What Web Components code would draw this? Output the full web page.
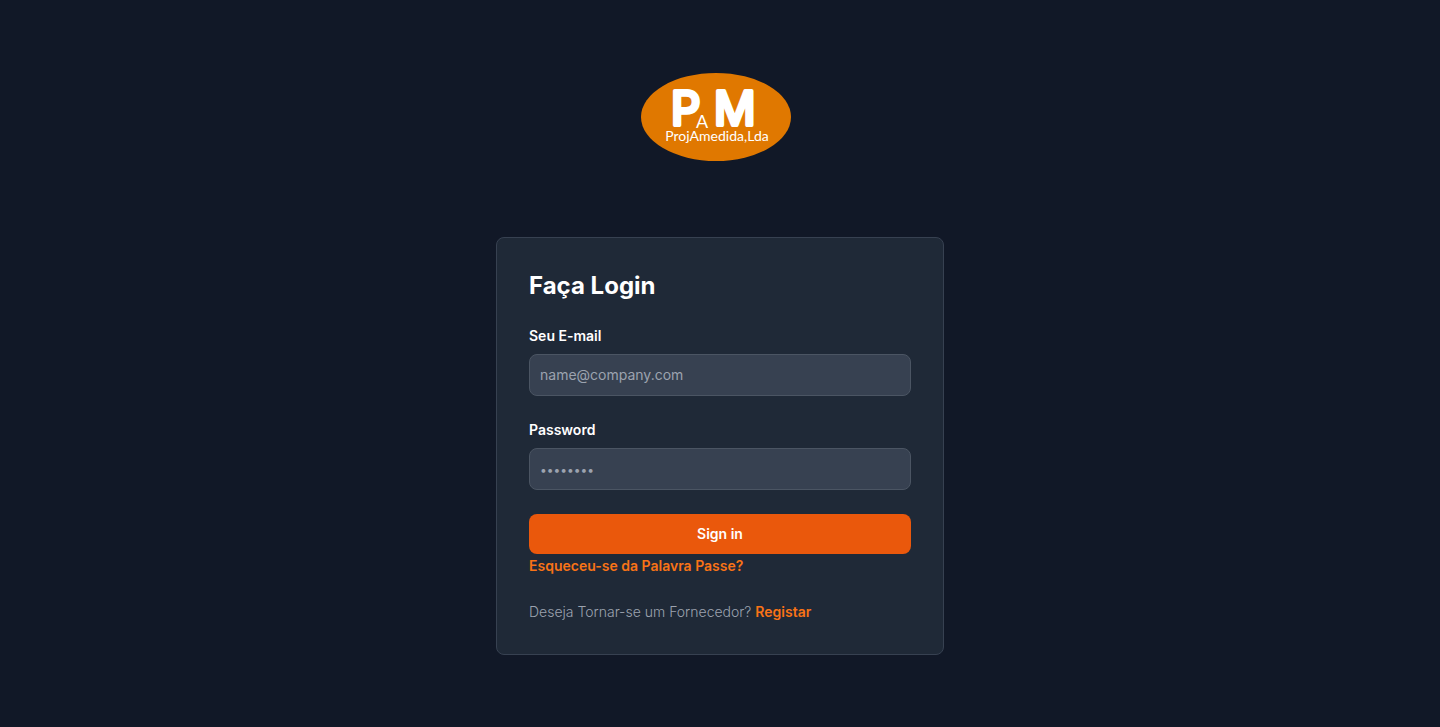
<!DOCTYPE html>
<html lang="pt">
<head>
  <meta charset="UTF-8">
  <meta name="viewport" content="width=device-width, initial-scale=1.0">
  <title>ProjAmedida - Login</title>
  <style>
    body {
      margin: 0;
      background: #111827;
      color: white;
      font-family: Inter, "Liberation Sans", sans-serif;
      font-size: 14px;
      line-height: 20px;
    }
  </style>
</head>
<body>
  <login-page>
    <brand-logo slot="logo"></brand-logo>
    <login-card>
      <span slot="title">Faça Login</span>
      <form-field label="Seu E-mail" type="email" name="email" placeholder="name@company.com"></form-field>
      <form-field label="Password" type="password" name="password" placeholder="••••••••"></form-field>
      <submit-button slot="actions">Sign in</submit-button>
      <text-link slot="actions" href="#recuperar">Esqueceu-se da Palavra Passe?</text-link>
      <span slot="footer">Deseja Tornar-se um Fornecedor? <text-link href="#registar">Registar</text-link></span>
    </login-card>
  </login-page>

  <script>
    class LoginPage extends HTMLElement {
      connectedCallback() {
        this.attachShadow({ mode: 'open' });
        this.shadowRoot.innerHTML = `
          <style>
            :host {
              display: block;
            }
            main {
              box-sizing: border-box;
              min-height: 100vh;
              padding: 32px 24px;
              display: flex;
              flex-direction: column;
              align-items: center;
              justify-content: center;
              gap: 76px;
            }
            ::slotted(login-card) {
              width: 100%;
              max-width: 448px;
            }
          </style>
          <main>
            <slot name="logo"></slot>
            <slot></slot>
          </main>
        `;
      }
    }
    customElements.define('login-page', LoginPage);

    class BrandLogo extends HTMLElement {
      connectedCallback() {
        this.attachShadow({ mode: 'open' });
        this.shadowRoot.innerHTML = `
          <style>
            :host {
              display: block;
              margin-right: 8px;
            }
            a, svg {
              display: block;
            }
            text {
              fill: white;
            }
            .initials {
              font: 46px Inter, sans-serif;
              stroke: white;
              stroke-width: 4;
              stroke-linejoin: round;
            }
            .small {
              font: 18px Lato, sans-serif;
            }
            .name {
              font: 14px Lato, sans-serif;
            }
          </style>
          <a href="#" aria-label="ProjAmedida">
            <svg width="150" height="88" viewBox="0 0 150 88">
              <ellipse cx="75" cy="44" rx="75" ry="44" fill="#e07800"/>
              <text class="initials" x="30" y="52">P</text>
              <text class="initials" x="73" y="52">M</text>
              <text class="small" x="55" y="55">A</text>
              <text class="name" x="76" y="68" text-anchor="middle">ProjAmedida,Lda</text>
            </svg>
          </a>
        `;
      }
    }
    customElements.define('brand-logo', BrandLogo);

    class LoginCard extends HTMLElement {
      connectedCallback() {
        this.attachShadow({ mode: 'open' });
        this.shadowRoot.innerHTML = `
          <style>
            :host {
              display: block;
              box-sizing: border-box;
              padding: 32px;
              background: #1f2937;
              border: 1px solid #374151;
              border-radius: 8px;
            }
            h1 {
              margin: 0 0 24px;
              font-size: 24px;
              line-height: 32px;
              font-weight: 700;
            }
            form {
              display: flex;
              flex-direction: column;
              gap: 24px;
            }
            .actions {
              line-height: 24px;
            }
            p {
              margin: 0;
              color: #9ca3af;
              font-weight: 300;
            }
          </style>
          <h1><slot name="title"></slot></h1>
          <form>
            <slot></slot>
            <div class="actions"><slot name="actions"></slot></div>
            <p><slot name="footer"></slot></p>
          </form>
        `;
      }
    }
    customElements.define('login-card', LoginCard);

    class FormField extends HTMLElement {
      connectedCallback() {
        const label = this.getAttribute('label');
        const type = this.getAttribute('type');
        const name = this.getAttribute('name');
        const placeholder = this.getAttribute('placeholder');
        this.attachShadow({ mode: 'open' });
        this.shadowRoot.innerHTML = `
          <style>
            :host {
              display: block;
            }
            label {
              display: block;
              margin-bottom: 8px;
              font-weight: 600;
            }
            input {
              display: block;
              box-sizing: border-box;
              width: 100%;
              height: 42px;
              padding: 10px;
              font: inherit;
              color: white;
              background: #374151;
              border: 1px solid #4b5563;
              border-radius: 8px;
            }
            input::placeholder {
              color: #9ca3af;
            }
            input[type="password"]::placeholder {
              font-size: 12px;
            }
            input:focus {
              outline: none;
              border-color: #f97316;
            }
          </style>
          <label for="${name}">${label}</label>
          <input id="${name}" type="${type}" name="${name}" placeholder="${placeholder}">
        `;
      }
    }
    customElements.define('form-field', FormField);

    class SubmitButton extends HTMLElement {
      connectedCallback() {
        this.attachShadow({ mode: 'open' });
        this.shadowRoot.innerHTML = `
          <style>
            :host {
              display: block;
            }
            button {
              display: block;
              width: 100%;
              padding: 10px 20px;
              font: inherit;
              font-weight: 600;
              line-height: 20px;
              color: white;
              background: #ea580c;
              border: none;
              border-radius: 8px;
              cursor: pointer;
            }
            button:hover {
              background: #c2410c;
            }
          </style>
          <button type="submit"><slot></slot></button>
        `;
      }
    }
    customElements.define('submit-button', SubmitButton);

    class TextLink extends HTMLElement {
      connectedCallback() {
        this.attachShadow({ mode: 'open' });
        this.shadowRoot.innerHTML = `
          <style>
            :host {
              display: inline;
            }
            a {
              color: #f97316;
              font-weight: 600;
              text-decoration: none;
            }
            a:hover {
              text-decoration: underline;
            }
          </style>
          <a href="${this.getAttribute('href')}"><slot></slot></a>
        `;
      }
    }
    customElements.define('text-link', TextLink);
  </script>
</body>
</html>
